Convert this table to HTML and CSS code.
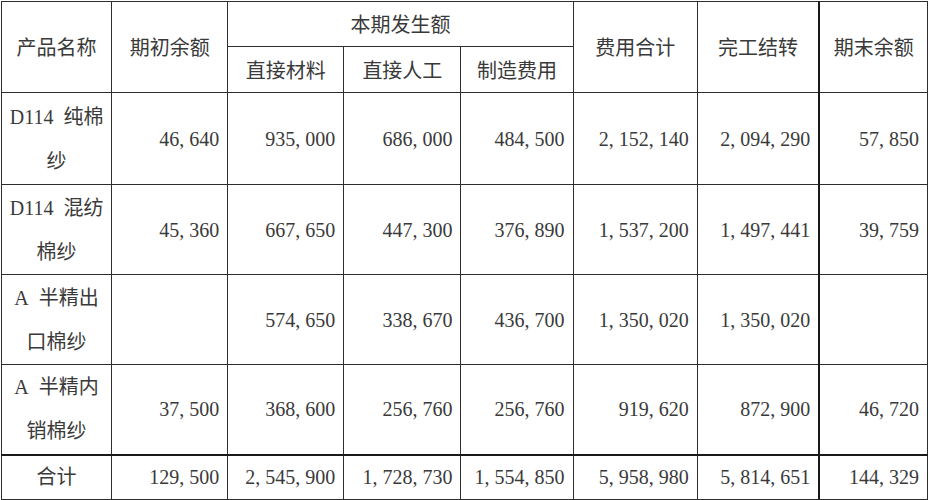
FILE: index.html
```html
<!DOCTYPE html>
<html lang="zh">
<head>
<meta charset="utf-8">
<link rel="stylesheet" href="styles.css">
</head>
<body>
<div class="page">
<table class="cost">
  <colgroup>
    <col class="c1"><col class="c2"><col class="c3"><col class="c4"><col class="c5"><col class="c6"><col class="c7"><col class="c8">
  </colgroup>
  <tr class="h1">
    <th rowspan="2">产品名称</th>
    <th rowspan="2">期初余额</th>
    <th colspan="3" class="grp">本期发生额</th>
    <th rowspan="2">费用合计</th>
    <th rowspan="2">完工结转</th>
    <th rowspan="2" class="thick-l">期末余额</th>
  </tr>
  <tr class="h2">
    <th>直接材料</th>
    <th>直接人工</th>
    <th>制造费用</th>
  </tr>
  <tr class="r r1">
    <td class="name">D114&ensp;纯棉<br>纱</td>
    <td>46, 640</td>
    <td>935, 000</td>
    <td>686, 000</td>
    <td>484, 500</td>
    <td>2, 152, 140</td>
    <td>2, 094, 290</td>
    <td class="thick-l">57, 850</td>
  </tr>
  <tr class="r">
    <td class="name">D114&ensp;混纺<br>棉纱</td>
    <td>45, 360</td>
    <td>667, 650</td>
    <td>447, 300</td>
    <td>376, 890</td>
    <td>1, 537, 200</td>
    <td>1, 497, 441</td>
    <td class="thick-l">39, 759</td>
  </tr>
  <tr class="r">
    <td class="name">A&ensp;半精出<br>口棉纱</td>
    <td></td>
    <td>574, 650</td>
    <td>338, 670</td>
    <td>436, 700</td>
    <td>1, 350, 020</td>
    <td>1, 350, 020</td>
    <td class="thick-l"></td>
  </tr>
  <tr class="r">
    <td class="name">A&ensp;半精内<br>销棉纱</td>
    <td>37, 500</td>
    <td>368, 600</td>
    <td>256, 760</td>
    <td>256, 760</td>
    <td>919, 620</td>
    <td>872, 900</td>
    <td class="thick-l">46, 720</td>
  </tr>
  <tr class="total">
    <td class="name">合计</td>
    <td>129, 500</td>
    <td>2, 545, 900</td>
    <td>1, 728, 730</td>
    <td>1, 554, 850</td>
    <td>5, 958, 980</td>
    <td>5, 814, 651</td>
    <td class="thick-l">144, 329</td>
  </tr>
</table>
</div>
</body>
</html>
```
FILE: styles.css
```css
html, body {
  margin: 0;
  padding: 0;
  background: #ffffff;
}
.page {
  padding: 1px 0 0 1px;
}
.cost {
  border-collapse: collapse;
  table-layout: fixed;
  width: 927px;
  font-family: "Liberation Serif", "Noto Sans CJK SC", serif;
  font-size: 20px;
  color: #3a3a3a;
}
.c1 { width: 110px; }
.c2 { width: 116px; }
.c3 { width: 116px; }
.c4 { width: 117px; }
.c5 { width: 112px; }
.c6 { width: 124px; }
.c7 { width: 122px; }
.c8 { width: 108px; }
.cost th, .cost td {
  border: 1px solid #2e2e2e;
  padding: 0;
  font-weight: normal;
  line-height: 24px;
}
.cost th {
  text-align: center;
  font-family: "Noto Sans CJK SC", sans-serif;
  font-size: 20px;
}
.h1 { height: 45px; }
.h2 { height: 46px; }
.r { height: 90px; }
.r1 { height: 92px; }
.total { height: 45px; }
.cost td {
  text-align: right;
  padding-right: 8px;
}
.cost td.name {
  text-align: center;
  padding: 0;
  font-size: 20px;
  line-height: 44px;
}
.total td.name {
  line-height: 24px;
}
.cost .thick-l {
  border-left: 2px solid #1a1a1a;
}
.total td {
  border-top: 2px solid #1a1a1a;
}
```
